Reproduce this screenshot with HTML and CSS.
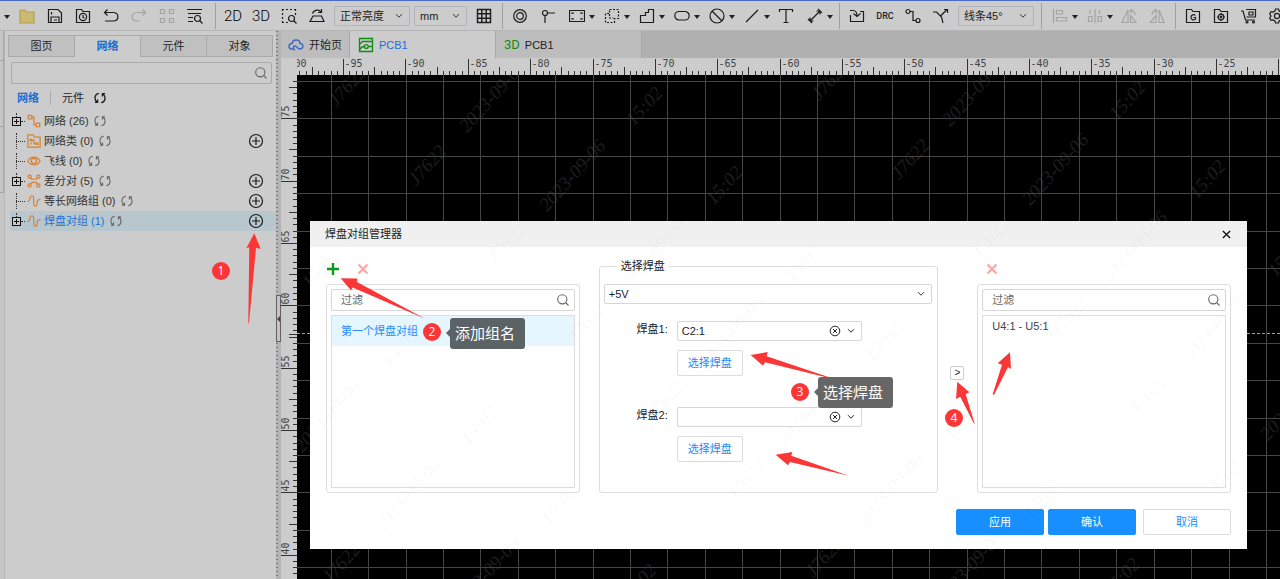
FILE: index.html
```html
<!DOCTYPE html>
<html lang="zh-CN">
<head>
<meta charset="utf-8">
<title>焊盘对组管理器</title>
<link rel="stylesheet" href="styles.css">
</head>
<body>
<svg class="defs" width="0" height="0" aria-hidden="true">
  <symbol id="refresh" viewBox="0 0 12 12"><path d="M4.800 1.300C.2 2 -.2 8 3.300 10M.9 10.300h2.700V7.600M7.200 10.700C11.800 10 12.200 4 8.700 2M11.100 1.700H8.400v2.700"/></symbol>
  <symbol id="search" viewBox="0 0 12 12"><circle cx="5.3" cy="5.3" r="4.6"/><path d="M8.7 8.7l2.800 2.800"/></symbol>
  <symbol id="chev" viewBox="0 0 8 6"><path d="M1 1.2l3 3 3-3"/></symbol>
  <symbol id="plusc" viewBox="0 0 16 16"><circle cx="8" cy="8" r="6.500"/><path d="M8 4v8M4 8h8"/></symbol>
  <symbol id="clear" viewBox="0 0 12 12"><circle cx="6" cy="6" r="4.800"/><path d="M4 4l4 4M8 4l-4 4"/></symbol>
  <symbol id="wave" viewBox="0 0 16 16"><path d="M.5 8.500h1.200C3.500 8.500 3 2 5.500 2S7.600 5 7.600 8s0 6 2.200 6 1.800-3 1.900-5c0-2 1.500-3 3.800-2.500"/></symbol>
</svg>
<div class="app">
  <header class="toolbar">
    <button class="tb tb-caret" aria-label="更多"><i class="caret"></i></button>
    <button class="tb" aria-label="打开"><svg viewBox="0 0 16 16"><path d="M1 2h5l1.500 2H15v11H1z" fill="#c9b972" stroke="#b3a04f"/></svg></button>
    <button class="tb" aria-label="保存"><svg viewBox="0 0 16 16"><path d="M1.500 1.500h9.500l3.500 3.500v9.500h-13zM4 14V9h8v5M4.500 4v2.500M7 12h3" /></svg></button>
    <button class="tb" aria-label="历史"><svg viewBox="0 0 16 16"><path d="M1.500 14.500v-13h5l1.500 2h6.500v11z"/><circle cx="8" cy="9" r="3.600"/><path d="M8 7v2.200l1.500 1"/></svg></button>
    <button class="tb" aria-label="撤销"><svg viewBox="0 0 16 16"><path d="M4.500 1.500L1.500 4.500l3 3M1.500 4.500H10c6.500 0 6.500 8.500 0 8.500H2"/></svg></button>
    <button class="tb dim" aria-label="重做"><svg viewBox="0 0 16 16"><path d="M11.500 1.500l3 3-3 3M14.500 4.500H6c-6.500 0-6.500 8.500 0 8.500h3"/></svg></button>
    <button class="tb dim" aria-label="布局"><svg viewBox="0 0 16 16"><path d="M1.500 1.500h4v4h-4zM10.500 1.500h4v4h-4zM1.500 10.500h4v4h-4zM10.500 10.500h4v4h-4z"/></svg></button>
    <button class="tb tb-last" aria-label="查找"><svg viewBox="0 0 16 16"><path d="M0 1.500h15M1 5.500h13M1 9.500h5M1 13.500h5"/><circle cx="10.500" cy="10.500" r="3"/><path d="M13 13l2.500 2.500"/></svg></button>
    <span class="sep"></span>
    <button class="tb tb-text">2D</button>
    <button class="tb tb-text">3D</button>
    <button class="tb" aria-label="框选"><svg viewBox="0 0 16 16"><path d="M1.500 1v14M1 1.500h14M14.500 1v6M1 14.500h6" stroke-dasharray="2 2"/><circle cx="10.500" cy="10.500" r="3"/><path d="M13 13l2.500 2.500"/></svg></button>
    <button class="tb" aria-label="翻板"><svg viewBox="0 0 16 16"><path d="M4 8h8.500l2.500 5.500H1zM3.500 5.500c1.500-4 6.500-4.500 8.500-1.500M12.500 1v3.500H9"/></svg></button>
    <div class="picks">
      <span class="pick pick-wide"><select aria-label="亮度"><option>正常亮度</option></select><svg><use href="#chev"/></svg></span>
      <span class="pick"><select aria-label="单位"><option>mm</option></select><svg><use href="#chev"/></svg></span>
    </div>
    <button class="tb" aria-label="网格"><svg viewBox="0 0 16 16"><path d="M1.500 1.500h13v13h-13zM5.800 1v14M10.200 1v14M1 5.800h14M1 10.200h14" stroke-width="1.400"/></svg></button>
    <span class="sep"></span>
    <button class="tb" aria-label="焊盘"><svg viewBox="0 0 16 16"><circle cx="8" cy="8" r="6.300"/><circle cx="8" cy="8" r="3.300"/></svg></button>
    <button class="tb" aria-label="引脚"><svg viewBox="0 0 16 16"><circle cx="5" cy="5" r="2.500"/><path d="M5 7.500V15M7.500 5H15"/></svg></button>
    <button class="tb tb-dd" aria-label="矩形"><svg viewBox="0 0 16 16"><path d="M.5 2.500h15v11H.5z"/><path d="M3 6V5h2M11 5h2v1M13 10v1h-2M5 11H3v-1"/></svg><i class="caret"></i></button>
    <button class="tb tb-dd" aria-label="区域"><svg viewBox="0 0 16 16"><path d="M5.500 1.500h9v9h-4v4h-9v-9h4z" stroke-dasharray="2 1.500"/><path d="M5.500 6v4h4" stroke-dasharray="2 1.500"/></svg><i class="caret"></i></button>
    <button class="tb tb-dd" aria-label="多边形"><svg viewBox="0 0 16 16"><path d="M1.500 7.500h5v-3h3v-3h5v13h-13z"/></svg><i class="caret"></i></button>
    <button class="tb tb-dd" aria-label="槽孔"><svg viewBox="0 0 16 16"><rect x=".8" y="3.500" width="14.400" height="8.500" rx="4.200"/></svg><i class="caret"></i></button>
    <button class="tb tb-dd" aria-label="禁止区"><svg viewBox="0 0 16 16"><circle cx="8" cy="8" r="7"/><path d="M3 3l10 10"/></svg><i class="caret"></i></button>
    <button class="tb tb-dd" aria-label="线条"><svg viewBox="0 0 16 16"><path d="M2 14L14 2"/></svg><i class="caret"></i></button>
    <button class="tb" aria-label="文本"><svg viewBox="0 0 16 16"><path d="M1.500 4V1.500h13V4M8 1.500v13M5.500 14.500h5"/></svg></button>
    <button class="tb tb-dd" aria-label="尺寸"><svg viewBox="0 0 16 16"><path d="M3 13L13 3M9.500 3H13v3.500M3 9.500V13h3.500M11 .8l4 4M1 11l4 4"/></svg><i class="caret"></i></button>
    <span class="sep"></span>
    <button class="tb" aria-label="导入"><svg viewBox="0 0 16 16"><path d="M1.500 7v6.500h13V3.500H11M1 2.500h3c3 0 4 2 4 5.500M4.500 5.500L8 8.500l3.500-3"/></svg></button>
    <button class="tb tb-drc">DRC</button>
    <button class="tb" aria-label="布线"><svg viewBox="0 0 16 16"><circle cx="3" cy="3.500" r="2"/><circle cx="13" cy="12.500" r="2"/><path d="M5 3.500h3v9h3"/></svg></button>
    <button class="tb" aria-label="自动"><svg viewBox="0 0 16 16"><path d="M0 4h3.500l5 5 1.500 6M7.500 8L14 1.500M11 1.500h3.500V5"/></svg></button>
    <div class="picks">
      <span class="pick pick-wide"><select aria-label="线条角度"><option>线条45°</option></select><svg><use href="#chev"/></svg></span>
    </div>
    <span class="sep"></span>
    <button class="tb tb-dd dim" aria-label="对齐"><svg viewBox="0 0 16 16"><path d="M1.500 1v14M4.500 2.500h6v3.500h-6zM4.500 9.500h10v3.500h-10z"/></svg><i class="caret"></i></button>
    <button class="tb tb-dd dim" aria-label="分布"><svg viewBox="0 0 16 16"><path d="M1.500 8.500h3.500v5H1.500zM11 8.500h3.500v5H11zM8 1v14M3 2v4M12.500 2v4"/></svg><i class="caret"></i></button>
    <button class="tb dim" aria-label="左旋"><svg viewBox="0 0 16 16"><path d="M7 2v12.500H1zM9.500 14.500H15L9.500 7.500zM9 3c3-1 5 1 5 4M11 1L9 3l2 2"/></svg></button>
    <button class="tb dim" aria-label="右旋"><svg viewBox="0 0 16 16"><path d="M10 2v12.500H15zM7 14.500H1l6-7zM3 7c0-3 2-5 5-4M6 1l2 2-2 2"/></svg></button>
    <span class="sep"></span>
    <button class="tb" aria-label="Gerber"><svg viewBox="0 0 16 16"><path d="M1.500 14.500v-13h5l1.500 2h6.500v11z"/><path d="M10.300 7.500c-1-1.300-4.300-1-4.300 1.800s3.300 3.300 4.500 1.700V9.500H8.500"/></svg></button>
    <button class="tb" aria-label="坐标文件"><svg viewBox="0 0 16 16"><path d="M1.500 14.500v-13h5l1.500 2h6.500v11z"/><circle cx="8" cy="9" r="2.800"/><circle cx="8" cy="9" r=".8"/><path d="M8 5v1M8 12v1M4 9h1M11 9h1"/></svg></button>
    <button class="tb" aria-label="下单"><svg viewBox="0 0 16 16"><path d="M0 3h2l2.500 9H14M5 1.500h9.500v7.500H5.500"/><path d="M8 4h4v3H8z"/><circle cx="6" cy="14" r="1"/><circle cx="12.500" cy="14" r="1"/></svg></button>
    <button class="tb" aria-label="设置"><svg viewBox="0 0 16 16"><circle cx="8" cy="8" r="2.600"/><path d="M6.500 1h3l.6 2 1.900 1 2-.4 1.300 2.400L14 8l1.300 2-1.300 2.400-2-.4-1.900 1-.6 2h-3l-.6-2-1.900-1-2 .4L.7 10 2 8 .7 6 2 3.600l2 .4 1.900-1z"/></svg></button>
  </header>

  <div class="work">
    <div class="edge"><i></i><i></i><i></i></div>
    <aside class="side">
      <nav class="side-tabs">
        <button>图页</button><button class="on">网络</button><button>元件</button><button>对象</button>
      </nav>
      <label class="side-search"><input type="text" aria-label="搜索"><svg class="ico"><use href="#search"/></svg></label>
      <div class="switch">
        <a href="#net" class="on">网络</a><a href="#part">元件</a>
        <button class="bare" aria-label="刷新"><svg class="ico ico-dark"><use href="#refresh"/></svg></button>
      </div>
      <ul class="tree">
        <li><span class="node box"></span><svg class="kind" viewBox="0 0 16 16"><path d="M1.500 1.500h4v4h-4zM10.500 10.500h4v4h-4zM5.500 3.500H8v9h2.500"/></svg><span>网络 (26)</span><svg class="ico"><use href="#refresh"/></svg></li>
        <li><span class="node"></span><svg class="kind" viewBox="0 0 16 16"><path d="M1 15V1h6l1.500 2.500H15V15z"/><path d="M3.500 6h2v2h-2zM10.500 10h2v2h-2zM5.500 7h2.500v4h2.500M4 12l1-2"/></svg><span>网络类 (0)</span><svg class="ico"><use href="#refresh"/></svg><button class="bare add" aria-label="添加网络类"><svg><use href="#plusc"/></svg></button></li>
        <li><span class="node"></span><svg class="kind" viewBox="0 0 16 16"><path d="M1 8c3-6 11-6 14 0-3 6-11 6-14 0z"/><circle cx="8" cy="8" r="3"/></svg><span>飞线 (0)</span><svg class="ico"><use href="#refresh"/></svg></li>
        <li><span class="node box"></span><svg class="kind" viewBox="0 0 16 16"><circle cx="3" cy="3" r="1.800"/><circle cx="13" cy="3" r="1.800"/><circle cx="3" cy="13" r="1.800"/><circle cx="13" cy="13" r="1.800"/><path d="M4 4.500c1 2 7 2 8 0M4 11.500c1-3 7-3 8 0"/></svg><span>差分对 (5)</span><svg class="ico"><use href="#refresh"/></svg><button class="bare add" aria-label="添加差分对"><svg><use href="#plusc"/></svg></button></li>
        <li><span class="node"></span><svg class="kind"><use href="#wave"/></svg><span>等长网络组 (0)</span><svg class="ico"><use href="#refresh"/></svg><button class="bare add" aria-label="添加等长网络组"><svg><use href="#plusc"/></svg></button></li>
        <li class="on"><span class="node box"></span><svg class="kind"><use href="#wave"/></svg><span>焊盘对组 (1)</span><svg class="ico"><use href="#refresh"/></svg><button class="bare add" aria-label="添加焊盘对组"><svg><use href="#plusc"/></svg></button></li>
      </ul>
    </aside>
    <div class="splitter"><button aria-label="折叠"></button></div>

    <main class="editor">
      <nav class="docs">
        <button class="doc doc-home"><svg viewBox="0 0 16 16" stroke="#3f68c9" fill="none" stroke-width="1.500"><path d="M5 12H4C0 12 0 6.500 4 6.500 5 1.500 12 2 12 6.500c4 0 3.500 5.500 0 5.500-3 0-3-3-5-3s-2.500 3 0 4"/></svg>开始页</button>
        <button class="doc on"><svg viewBox="0 0 16 16" stroke="#138a13" fill="none" stroke-width="1.300"><path d="M1.500 1.500h13v13h-13zM1.500 7.500l3-3h10M1.500 13.500c1-3 2.500-4 4.800-4M10.200 9.500h4.300"/><circle cx="8.300" cy="9.500" r="1.900"/></svg>PCB1</button>
        <button class="doc"><span class="three">3D</span>PCB1</button>
      </nav>
      <svg class="stage" id="stage" aria-hidden="true"></svg>
    </main>
  </div>

  <section class="dialog" role="dialog" aria-labelledby="dlg-title">
    <header class="dlg-head"><h1 id="dlg-title">焊盘对组管理器</h1><button class="bare" aria-label="关闭"><svg viewBox="0 0 10 10" class="x-dark"><path d="M1 1l8 8M9 1l-8 8"/></svg></button></header>
    <div class="dlg-body">
      <div class="col">
        <div class="tools">
          <button class="bare" aria-label="添加"><svg class="plus" viewBox="0 0 12 12"><path d="M6 0v12M0 6h12"/></svg></button>
          <button class="bare" aria-label="删除"><svg class="cross" viewBox="0 0 12 12"><path d="M1.500 1.500l9 9M10.500 1.500l-9 9"/></svg></button>
        </div>
        <div class="panel">
          <label class="filter"><input type="text" placeholder="过滤" aria-label="过滤"><svg class="ico"><use href="#search"/></svg></label>
          <ul class="list"><li class="on">第一个焊盘对组</li></ul>
        </div>
      </div>
      <fieldset class="pads">
        <legend>选择焊盘</legend>
        <span class="netpick"><select aria-label="网络"><option>+5V</option></select><svg><use href="#chev"/></svg></span>
        <div class="pad">
          <label for="pad1">焊盘1:</label>
          <span class="combo"><input id="pad1" type="text" value="C2:1"><button class="bare" aria-label="清除"><svg class="clr"><use href="#clear"/></svg></button><button class="bare" aria-label="展开"><svg class="chv"><use href="#chev"/></svg></button></span>
          <button class="btn pad-btn">选择焊盘</button>
        </div>
        <div class="pad pad-next">
          <label for="pad2">焊盘2:</label>
          <span class="combo"><input id="pad2" type="text"><button class="bare" aria-label="清除"><svg class="clr"><use href="#clear"/></svg></button><button class="bare" aria-label="展开"><svg class="chv"><use href="#chev"/></svg></button></span>
          <button class="btn pad-btn">选择焊盘</button>
        </div>
      </fieldset>
      <button class="move">&gt;</button>
      <div class="col">
        <div class="tools tools-right">
          <button class="bare" aria-label="删除"><svg class="cross" viewBox="0 0 12 12"><path d="M1.500 1.500l9 9M10.500 1.500l-9 9"/></svg></button>
        </div>
        <div class="panel">
          <label class="filter"><input type="text" placeholder="过滤" aria-label="过滤"><svg class="ico"><use href="#search"/></svg></label>
          <ul class="list"><li class="plain">U4:1 - U5:1</li></ul>
        </div>
      </div>
    </div>
    <footer class="dlg-foot"><button class="btn main">应用</button><button class="btn main">确认</button><button class="btn cancel">取消</button></footer>
    <svg class="marks" id="marks" aria-hidden="true"></svg>
  </section>

  <svg class="arrows" aria-hidden="true">
    <path d="M254.300 233.300L246.300 248.300 249.300 247.300 248.300 323.300H249L256 247.700 260.700 249z"/>
    <path d="M340.700 278.300L357.300 278.500 357 282 425 318.700 352.700 287.500 351 290.300z"/>
    <path d="M750.700 355L767.700 352 766.700 356.300 837.300 380 765 362.300 763 365.700z"/>
    <path d="M775.700 454.700L792.300 452 791.300 455.700 848.700 475.700 790 462 788 465.300z"/>
    <path d="M1010 352.300L1011 369 1008 367 994 395 992.700 394.300 1002 364.700 997.700 363.300z"/>
    <path d="M957.300 381.700L969.300 392.300 965.700 394.300 974.700 423.700H974L960.300 396.700 956 399z"/>
  </svg>
  <span class="step s1">1</span>
  <span class="step s2">2</span><span class="tip t2">添加组名</span>
  <span class="step s3">3</span><span class="tip t3">选择焊盘</span>
  <span class="step s4">4</span>
</div>
<script src="script.js"></script>
</body>
</html>
```

FILE: styles.css
```css
* { box-sizing: border-box; }
body {
  margin: 0;
  font: 11px/16px "Liberation Sans", "Noto Sans CJK SC", sans-serif;
  color: #222;
}
button, input, select { font: inherit; color: inherit; margin: 0; padding: 0; }
button, .bare { border: 0; background: none; }
ul { list-style: none; margin: 0; padding: 0; }
.defs { position: absolute; }
.app {
  position: relative;
  display: flex;
  flex-direction: column;
  height: 100vh;
  overflow: hidden;
  background: #ccc;
}
.bare { display: flex; }

/* toolbar */
.toolbar {
  display: flex;
  align-items: center;
  flex: none;
  height: 31px;
  overflow: hidden;
  border-top: 1px solid #4a6bc4;
  border-bottom: 1px solid #b5b5b5;
}
.tb {
  display: flex;
  align-items: center;
  justify-content: center;
  flex: none;
  width: 28px;
  height: 28px;
  white-space: nowrap;
}
.tb svg { width: 16px; height: 16px; flex: none; fill: none; stroke: #1c1c1c; stroke-width: 1.2; }
.tb.dim svg { stroke: #a3a3a3; }
.tb-caret { width: 13px; }
.tb-last { margin-right: 2px; }
.tb-dd { width: 35px; justify-content: flex-start; gap: 3px; padding-left: 7px; }
.tb-text { font: 300 15px/16px "Roboto", sans-serif; color: #000; }
.tb-drc { font: 500 9px/16px "Roboto", sans-serif; }
.caret { border: 3px solid transparent; border-top: 4px solid #222; border-bottom: 0; margin: 2px 1px 0; flex: none; }
.sep { flex: none; width: 1px; height: 26px; margin: 0 3px 0 4px; background: #a0a0a0; }
.picks { display: flex; flex: none; gap: 4px; margin: 0 3px; }
.pick { position: relative; width: 53px; }
.pick-wide { width: 76px; }
.pick select {
  appearance: none;
  display: block;
  width: 100%;
  height: 20px;
  padding-left: 5px;
  border: 1px solid #b2b5bd;
  border-radius: 2px;
  background: transparent;
}
.pick svg, .netpick svg {
  position: absolute;
  right: 7px;
  top: 7px;
  width: 8px;
  height: 6px;
  fill: none;
  stroke: #333;
  pointer-events: none;
}

/* left panel */
.work { display: flex; flex: 1; min-height: 0; }
.edge { flex: none; width: 4px; background: #c6c6c6; }
.edge i { display: block; height: 30px; border-bottom: 1px solid #a5a5a5; border-right: 1px solid #a5a5a5; }
.edge i + i { height: 66px; }
.side { flex: none; width: 272px; padding-top: 4px; border-left: 1px solid #b5b5b5; }
.side-tabs { display: flex; padding: 0 3px 0 3px; }
.side-tabs button {
  flex: 1;
  height: 22px;
  background: #c0c0c0;
  border: 1px solid #a9a9a9;
  border-left-width: 0;
}
.side-tabs button:first-child { border-left-width: 1px; }
.side-tabs .on { background: #ccc; border-bottom-color: #ccc; color: #1a6fd0; font-weight: bold; }
.side-search {
  display: flex;
  align-items: center;
  height: 22px;
  margin: 5px 4px 0 6px;
  padding-right: 4px;
  border: 1px solid #aaa;
  border-radius: 2px;
}
input { flex: 1; min-width: 0; border: 0; background: none; outline: 0; }
.ico { flex: none; width: 12px; height: 12px; fill: none; stroke: #666; stroke-width: 1.1; }
.ico-dark { stroke: #1c1c1c; stroke-width: 1.3; }
.switch { display: flex; align-items: center; height: 27px; padding-left: 12px; }
.switch a { color: #222; text-decoration: none; }
.switch .on { color: #1a6fd0; font-weight: bold; padding-right: 11px; margin-right: 11px; border-right: 1px solid #aaa; line-height: 14px; }
.switch .bare { margin-left: 10px; }
.tree li {
  display: flex;
  align-items: center;
  height: 20px;
  margin-left: 5px;
  padding-left: 2px;
  color: #333;
}
.tree .on { background: #b8c7cd; color: #2272d6; }
.tree .kind { flex: none; width: 14px; height: 14px; margin-right: 3px; fill: none; stroke: #d98032; stroke-width: 1.4; }
.tree .ico { margin-left: 5px; }
.node { position: relative; flex: none; width: 13px; height: 20px; margin-right: 2px; }
.node::before { content: ""; position: absolute; left: 4px; top: 2px; height: 16px; border-left: 1px dotted #333; }
.node::after { content: ""; position: absolute; left: 4px; top: 10px; width: 9px; border-top: 1px dotted #333; }
.box {
  background:
    linear-gradient(#111, #111) 2px 10px / 5px 1px no-repeat,
    linear-gradient(#111, #111) 4px 8px / 1px 5px no-repeat,
    linear-gradient(#ccc, #ccc) 1px 7px / 7px 7px no-repeat,
    linear-gradient(#111, #111) 0 6px / 9px 9px no-repeat;
}
.box::before { height: 4px; }
.box::after { left: 9px; width: 4px; }
.add { margin: 0 12px 0 auto; }
.add svg { width: 16px; height: 16px; fill: none; stroke: #1c1c1c; stroke-width: 1.2; }
.splitter {
  position: relative;
  flex: none;
  width: 5px;
  border-right: 3px solid #b4b4b4;
  background: repeating-linear-gradient(#777 0 1px, #b4b4b4 1px 4px);
}
.splitter button {
  position: absolute;
  left: 0;
  top: 264px;
  width: 5px;
  height: 47px;
  border: 1px solid #665f5f;
  background: #c4c4c4;
}
.splitter button::after {
  content: "";
  position: absolute;
  left: 0;
  top: 20px;
  border: 3px solid transparent;
  border-right-color: #444;
  border-left: 0;
}

/* editor */
.editor { display: flex; flex-direction: column; flex: 1; min-width: 0; }
.docs { display: flex; flex: none; height: 27px; background: #b0b0b0; }
.doc {
  display: flex;
  align-items: center;
  gap: 5px;
  width: 146px;
  padding: 0 8px;
  background: #bdbdbd;
  border-right: 1px solid #a9a9a9;
}
.doc svg { width: 16px; height: 16px; }
.doc-home { width: 69px; padding: 0 0 0 7px; gap: 5px; white-space: nowrap; }
.docs .on { background: #ccc; color: #1f6fd6; }
.three { color: #138a13; font: 13px/16px "Roboto", sans-serif; }
.stage { flex: 1; width: 100%; min-height: 0; display: block; background: #000; }
.ruler { fill: #ccc; }
.tick { stroke: #333; shape-rendering: crispEdges; }
.grid { stroke: #454545; shape-rendering: crispEdges; }
.axis { stroke: #00e0e6; stroke-dasharray: 3 2; shape-rendering: crispEdges; }
.num { font: 10px "DejaVu Sans Mono", monospace; fill: #444; }
.wm { font: italic 19px "Liberation Serif", serif; }
.stage .wm { fill: #1e1e1e; }

/* dialog */
.dialog {
  position: absolute;
  left: 310px;
  right: 33px;
  top: 221px;
  background: #fff;
}
.dlg-head {
  display: flex;
  align-items: center;
  justify-content: space-between;
  height: 26px;
  padding: 0 16px 0 15px;
  background: #f0f0f0;
}
.dlg-head h1 { margin: 0; font-size: 11px; font-weight: normal; }
.x-dark { width: 9px; height: 9px; fill: none; stroke: #111; stroke-width: 1.5; }
.dlg-body {
  display: grid;
  grid-template-columns: minmax(0, 254fr) minmax(0, 371fr) 14px minmax(0, 267fr);
  padding: 0 16px;
}
.move + .col { margin-left: 13px; }
.tools { display: flex; align-items: center; gap: 18px; height: 37px; padding: 6px 0 0 1px; }
.tools-right { padding-left: 9px; }
.tools svg { width: 12px; height: 12px; stroke-width: 2.4; }
.plus { stroke: #0b9a18; }
.cross { stroke: #ffa8a8; }
.panel { padding: 4px; border: 1px solid #ddd; border-radius: 3px; }
.filter {
  display: flex;
  align-items: center;
  height: 22px;
  padding: 0 5px 0 9px;
  border: 1px solid #d6d6d6;
  border-radius: 2px;
}
.filter input::placeholder { color: #666; opacity: 1; }
.list { height: 173px; margin-top: 4px; border: 1px solid #ddd; }
.list li { height: 30px; padding-left: 9px; line-height: 30px; color: #444; }
.list .on { background: #e6f6ff; color: #2a8cff; }
.list .plain { height: 20px; line-height: 20px; }
.pads {
  min-width: 0;
  margin: 11px 12px 0 19px;
  padding: 10px 5px 0 4px;
  border: 1px solid #ddd;
  border-radius: 3px;
}
.pads legend { margin-left: 13px; padding: 0 4px; }
.netpick { position: relative; display: block; }
.netpick select {
  appearance: none;
  display: block;
  width: 100%;
  height: 20px;
  padding-left: 4px;
  border: 1px solid #d6d6d6;
  border-radius: 2px;
  background: #fff;
}
.pad {
  display: grid;
  grid-template-columns: 64px minmax(0, 185px);
  column-gap: 9px;
  row-gap: 9px;
  margin-top: 17px;
}
.pad-next { margin-top: 31px; }
.pad label { text-align: right; }
.combo {
  display: flex;
  align-items: center;
  gap: 6px;
  height: 20px;
  padding: 0 6px 0 4px;
  border: 1px solid #d6d6d6;
  border-radius: 2px;
}
.clr { width: 12px; height: 12px; fill: none; stroke: #222; }
.chv { width: 8px; height: 6px; fill: none; stroke: #222; }
.btn { height: 26px; border: 1px solid #ddd; border-radius: 2px; background: #fff; color: #1a8cff; }
.pad-btn { grid-column: 2; width: 66px; }
.move {
  align-self: center;
  width: 14px;
  height: 14px;
  margin-top: 6px;
  border: 1px solid #ccc;
  border-radius: 2px;
  background: #fff;
  font-size: 10px;
  line-height: 12px;
}
.dlg-foot { display: flex; justify-content: flex-end; gap: 4px; padding: 16px 16px 14px; }
.dlg-foot .btn { width: 88px; }
.dlg-foot .main { background: #188fff; border-color: #188fff; color: #fff; }
.dlg-foot .cancel { margin-left: 3px; }
.marks { position: absolute; left: 0; top: 0; width: 100%; height: 100%; pointer-events: none; }
.marks .wm { fill: rgba(0, 0, 0, 0.035); }

/* callouts */
.arrows { position: absolute; left: 0; top: 0; width: 100%; height: 100%; fill: #fc3636; pointer-events: none; }
.step {
  position: absolute;
  width: 18px;
  height: 18px;
  border-radius: 50%;
  background: #fc3636;
  color: #fff;
  font: 12px/18px "Open Sans", sans-serif;
  text-align: center;
}
.tip {
  position: absolute;
  width: 75px;
  height: 31px;
  padding-left: 5px;
  border-radius: 3px;
  background: #666;
  color: #fff;
  font-size: 15px;
  line-height: 31px;
  white-space: nowrap;
}
.tip::before {
  content: "";
  position: absolute;
  left: -4px;
  top: 11px;
  border: 4px solid transparent;
  border-right-color: #666;
  border-left: 0;
}
.s1 { left: 212px; top: 262px; }
.s2 { left: 423px; top: 323px; }
.s3 { left: 791px; top: 383px; }
.s4 { left: 945px; top: 409px; }
.t2 { left: 450px; top: 318px; background: #5c6366; }
.t2::before { border-right-color: #5c6366; }
.t3 { left: 818px; top: 377px; }
```

FILE: script.js
```js
const NS = 'http://www.w3.org/2000/svg';
function add(parent, name, attrs, text) {
  const el = document.createElementNS(NS, name);
  for (const key in attrs) el.setAttribute(key, attrs[key]);
  if (text) el.textContent = text;
  parent.appendChild(el);
  return el;
}
function line(parent, cls, x1, y1, x2, y2) {
  add(parent, 'line', { class: cls, x1, y1, x2, y2 });
}

// Diagonal user/date stamps, repeated over the whole window.
// Stamps that lie wholly behind the "cover" box are left out.
function stamps(svg, cover) {
  const box = svg.getBoundingClientRect();
  const parts = [['J7622', 0, 0, 14], ['2023-09-06', 145, 10, 30], ['15:02', 297, 20, 14]];
  for (let row = -2; row < 9; row++) {
    for (let k = -3; k < 4; k++) {
      for (const [text, dx, dy, r] of parts) {
        const px = Math.round(347 + row * 79.5 + k * 483 + dx);
        const py = Math.round(86 + row * 78.5 - k * 6 + dy);
        if (cover && px - r > cover.left && px + r < cover.right &&
            py - r > cover.top && py + r < cover.bottom) continue;
        const x = px - box.left, y = py - box.top;
        if (x < -r || y < -r || x > box.width + r || y > box.height + r) continue;
        add(svg, 'text', {
          class: 'wm', 'text-anchor': 'middle', 'dominant-baseline': 'central',
          transform: `translate(${x} ${y}) rotate(-48)`
        }, text);
      }
    }
  }
}

function drawStage() {
  const svg = document.getElementById('stage');
  svg.replaceChildren();
  const { width: w, height: h } = svg.getBoundingClientRect();
  const step = 62.35, rule = 17, side = 16;
  const x0 = 62.6, y0 = 60.8;
  stamps(svg, document.querySelector('.dialog').getBoundingClientRect());
  for (let x = 50.2 - step * 0.6; x < w; x += step * 0.6) {
    const p = Math.floor(x) + 0.5;
    line(svg, 'grid', p, rule, p, h);
  }
  for (let y = y0 - step * 0.6; y < h; y += step * 0.6) {
    const p = Math.floor(y) + 0.5;
    line(svg, 'grid', side, p, w, p);
  }
  line(svg, 'axis', side, 275.5, w, 275.5);

  add(svg, 'rect', { class: 'ruler', x: 0, y: 0, width: side, height: h });
  for (let i = -6; y0 + i * step / 10 < h; i++) {
    const y = y0 + i * step / 10;
    if (y < rule) continue;
    const len = i % 10 === 0 ? 16 : i % 5 === 0 ? 8 : 4;
    const p = Math.floor(y) + 0.5;
    line(svg, 'tick', side - len, p, side, p);
    if (i % 10 === 0) {
      add(svg, 'text', { class: 'num', transform: `translate(8 ${p - 1}) rotate(-90)` }, String(75 - i / 2));
    }
  }
  line(svg, 'tick', 8, 276.5, side, 276.5);

  add(svg, 'rect', { class: 'ruler', x: 0, y: 0, width: w, height: rule });
  const top = add(svg, 'svg', { x: side, y: 0, width: w - side, height: rule });
  for (let i = -10; x0 + i * step / 10 < w; i++) {
    const p = Math.floor(x0 + i * step / 10) + 0.5 - side;
    const len = i % 10 === 0 ? 16 : i % 5 === 0 ? 8 : 4;
    line(top, 'tick', p, rule - len, p, rule);
    if (i % 10 === 0) {
      add(top, 'text', { class: 'num', x: p + 1, y: 9 }, String(-95 + i / 2));
    }
  }
}

function draw() {
  drawStage();
  const marks = document.getElementById('marks');
  marks.replaceChildren();
  stamps(marks);
}
draw();
window.addEventListener('resize', draw);
```
